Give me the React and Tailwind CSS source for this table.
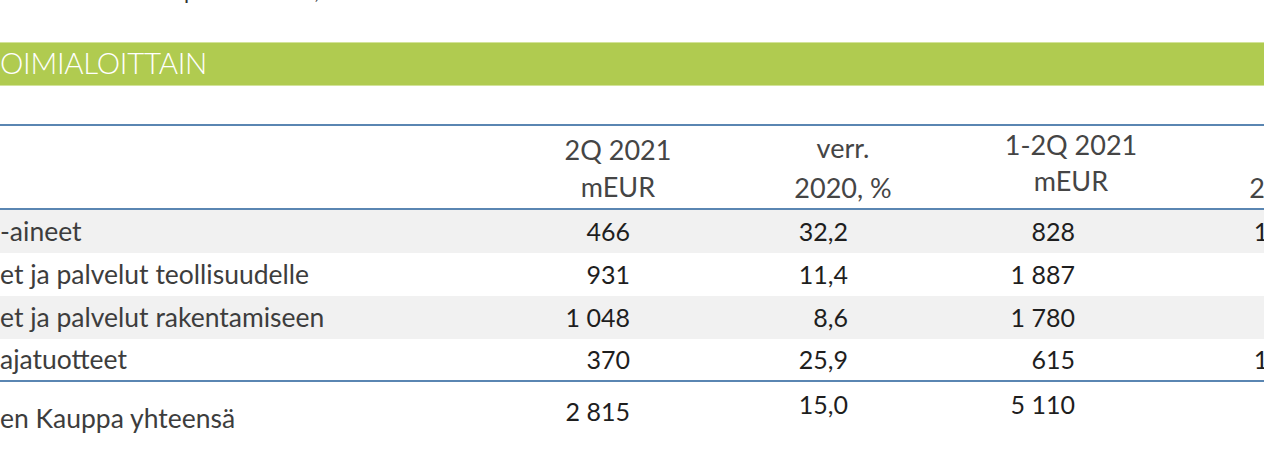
import React from "react";

const rows = [
  { label: "-aineet", a: "466", b: "32,2", c: "828", d: "19,4", grey: true },
  { label: "et ja palvelut teollisuudelle", a: "931", b: "11,4", c: "1 887", d: "7,9", grey: false },
  { label: "et ja palvelut rakentamiseen", a: "1 048", b: "8,6", c: "1 780", d: "6,1", grey: true },
  { label: "ajatuotteet", a: "370", b: "25,9", c: "615", d: "17,2", grey: false },
];

const App = () => {
  return (
    <div className="w-[1264px] h-[475px] overflow-hidden bg-white font-['Lato','Open_Sans',sans-serif]">
      {/* cut off line above */}
      <div className="h-[6px] overflow-hidden">
        <div className="-mt-[22px] text-[22px] leading-[26px] text-[#333] whitespace-nowrap">
          <span className="ml-[184px]">p</span>
          <span className="ml-[118px]">,</span>
        </div>
      </div>

      {/* section title bar */}
      <div className="mt-[36px] h-[44px] bg-[#b0cb50] border-y border-[#d3e39a] flex items-center">
        <span className="text-white text-[29.5px] font-light tracking-[-0.3px] leading-none -mt-[2px]">
          OIMIALOITTAIN
        </span>
      </div>

      {/* table */}
      <div className="mt-[38px] border-t-2 border-[#5a86b2]">
        {/* header */}
        <div className="flex h-[84px] text-[27px] text-[#454545] whitespace-nowrap border-b-2 border-[#5a86b2]">
          <div className="w-[540px] shrink-0" />
          <div className="w-[156px] shrink-0 text-center leading-[37px] pt-[5px]">
            <div>2Q 2021</div>
            <div>mEUR</div>
          </div>
          <div className="w-[294px] shrink-0 text-center leading-[40px] pt-[2px]">
            <div>verr.</div>
            <div>2020, %</div>
          </div>
          <div className="w-[162px] shrink-0 text-center leading-[36px] pt-[1px]">
            <div>1-2Q 2021</div>
            <div>mEUR</div>
          </div>
          <div className="w-[292px] shrink-0 text-center leading-[40px] pt-[2px]">
            <div>verr.</div>
            <div>2020, %</div>
          </div>
        </div>

        {rows.map((r, i) => (
          <div
            key={i}
            className={`flex items-center h-[43px] whitespace-nowrap ${
              r.grey ? "bg-[#f1f1f1]" : "bg-white"
            } ${i === rows.length - 1 ? "border-b-2 border-[#5a86b2]" : ""}`}
          >
            <div className="w-[470px] shrink-0 text-[26.5px] text-[#3d3d3d]">{r.label}</div>
            <div className="w-[160px] shrink-0 text-[25px] text-right text-[#1e1e1e]">{r.a}</div>
            <div className="w-[218px] shrink-0 text-[25px] text-right text-[#1e1e1e]">{r.b}</div>
            <div className="w-[227px] shrink-0 text-[25px] text-right text-[#1e1e1e]">{r.c}</div>
            <div className="w-[228px] shrink-0 text-[25px] text-right text-[#1e1e1e]">{r.d}</div>
          </div>
        ))}

        {/* total row */}
        <div className="flex items-start h-[60px] text-[25px] whitespace-nowrap">
          <div className="w-[470px] shrink-0 text-[26.5px] text-[#3d3d3d] pt-[17px]">en Kauppa yhteensä</div>
          <div className="w-[160px] shrink-0 text-right text-[#1e1e1e] pt-[11px]">2 815</div>
          <div className="w-[218px] shrink-0 text-right text-[#1e1e1e] pt-[4px]">15,0</div>
          <div className="w-[227px] shrink-0 text-right text-[#1e1e1e] pt-[4px]">5 110</div>
          <div className="w-[228px] shrink-0 text-right text-[#1e1e1e] pt-[4px]">8,5</div>
        </div>
      </div>
    </div>
  );
};

export default App;
